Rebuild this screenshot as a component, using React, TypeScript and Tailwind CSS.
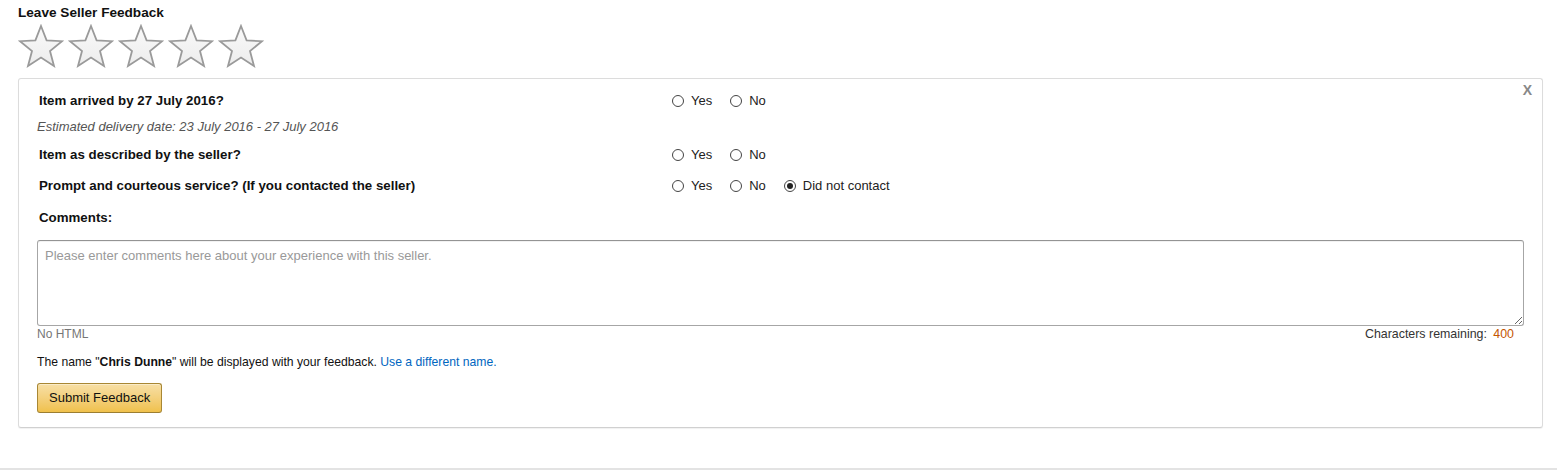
import React from "react";

const font = "font-['Liberation_Sans',Arial,sans-serif]";

function Star() {
  return (
    <svg width="46" height="44" viewBox="0 0 46 44" className="block">
      <defs>
        <linearGradient id="starFill" x1="0" y1="0" x2="0" y2="1">
          <stop offset="0" stopColor="#fafafa" />
          <stop offset="1" stopColor="#ececec" />
        </linearGradient>
      </defs>
      <polygon
        points="23,2 28.6,16.4 44,17.2 32,27 36,42 23,33.6 10,42 14,27 2,17.2 17.4,16.4"
        fill="url(#starFill)"
        stroke="#9a9a9a"
        strokeWidth="1.8"
        strokeLinejoin="miter"
      />
    </svg>
  );
}

function Radio({ label, checked }: { label: string; checked?: boolean }) {
  return (
    <span className="flex items-center gap-[7px] mr-[18px]">
      <span className="w-[12px] h-[12px] rounded-full border border-[#444] bg-white flex items-center justify-center">
        {checked && <span className="w-[6px] h-[6px] rounded-full bg-[#222]" />}
      </span>
      <span className="text-[13px] text-[#222]">{label}</span>
    </span>
  );
}

function Question({ text, options }: { text: string; options: { label: string; checked?: boolean }[] }) {
  return (
    <div className="flex items-center h-[18px]">
      <div className="w-[633px] text-[13.3px] font-bold text-[#111]">{text}</div>
      <div className="flex items-center">
        {options.map((o) => (
          <Radio key={o.label} label={o.label} checked={o.checked} />
        ))}
      </div>
    </div>
  );
}

export default function App() {
  return (
    <div className={`${font} bg-white w-[1557px] h-[472px] overflow-hidden`}>
      <div className="pl-[18px] pr-[14px] pt-[5px]">
        <h2 className="text-[13.6px] font-bold text-[#111] leading-[16px]">Leave Seller Feedback</h2>
        <div className="flex gap-[4px] mt-[3px]">
          {[0, 1, 2, 3, 4].map((i) => (
            <Star key={i} />
          ))}
        </div>

        <div className="relative mt-[10px] border border-[#dcdcdc] border-b-[#d0d0d0] rounded-[3px] shadow-[0_1px_1px_rgba(0,0,0,0.06)] pl-[18px] pr-[18px] pt-[13px] pb-[14px]">
          <span className="absolute right-[10px] top-[1px] text-[14px] font-bold text-[#888]">X</span>

          <div className="pl-[2px]">
            <Question text="Item arrived by 27 July 2016?" options={[{ label: "Yes" }, { label: "No" }]} />
          </div>
          <div className="mt-[8px] h-[18px] flex items-center text-[13px] italic text-[#555]">
            Estimated delivery date: 23 July 2016 - 27 July 2016
          </div>
          <div className="pl-[2px] mt-[10px]">
            <Question text="Item as described by the seller?" options={[{ label: "Yes" }, { label: "No" }]} />
          </div>
          <div className="pl-[2px] mt-[13px]">
            <Question
              text="Prompt and courteous service? (If you contacted the seller)"
              options={[{ label: "Yes" }, { label: "No" }, { label: "Did not contact", checked: true }]}
            />
          </div>
          <div className="pl-[2px] mt-[14px] h-[18px] flex items-center text-[13.3px] font-bold text-[#111]">Comments:</div>

          <textarea
            className="mt-[13px] block w-full h-[86px] border border-[#a6a6a6] border-t-[#949494] rounded-[3px] px-[7px] py-[5px] text-[13px] text-[#333] placeholder:text-[#999] resize-y outline-none shadow-[inset_0_1px_0_rgba(0,0,0,0.05)]"
            placeholder="Please enter comments here about your experience with this seller."
          />

          <div className="flex justify-between items-center h-[16px] pr-[10px] text-[12px]">
            <span className="text-[#767676]">No HTML</span>
            <span className="text-[#333] text-[12.4px]">
              Characters remaining: <span className="text-[#c45500] ml-[3px]">400</span>
            </span>
          </div>

          <p className="mt-[12px] h-[16px] flex items-center text-[12.2px] text-[#111]">
            The name "<b>Chris Dunne</b>" will be displayed with your feedback.&nbsp;
            <a className="text-[#0066c0]">Use a different name.</a>
          </p>

          <button className="mt-[13px] h-[30px] px-[11px] rounded-[3px] border border-[#a88734] border-b-[#9c7e31] bg-gradient-to-b from-[#f7dfa5] to-[#f0c14b] text-[13px] text-[#111] shadow-[inset_0_1px_0_rgba(255,255,255,0.4)]">
            Submit Feedback
          </button>
        </div>
      </div>
      <div className="mt-[40px] h-[2px] bg-[#e3e3e3]" />
    </div>
  );
}
